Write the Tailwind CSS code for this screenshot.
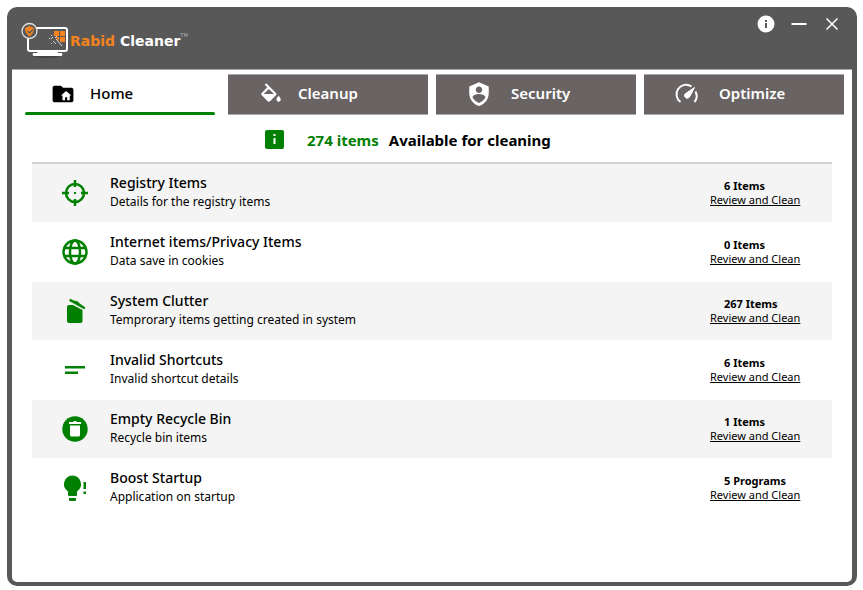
<!DOCTYPE html>
<html lang="en">
<head>
    <meta charset="UTF-8">
    <meta name="viewport" content="width=device-width, initial-scale=1.0">
    <title>Rabid Cleaner</title>
    <script src="https://cdn.jsdelivr.net/npm/@tailwindcss/browser@4"></script>
</head>
<body class="bg-white font-['Noto_Sans','Open_Sans',sans-serif] text-black">

<div class="min-h-screen flex flex-col pt-[7px] pr-[6px] pb-1 pl-[7px]">
<div class="flex-1 flex flex-col bg-[#585858] rounded-[10px] px-[5px] pb-1">

    <!-- Title bar -->
    <header class="flex justify-between items-start h-[62px] pl-2 pr-[11px] pt-2">
        <div class="flex items-start pt-1">
            <svg class="w-[50px] h-[40px]" viewBox="0 0 50 40" fill="none">
                <ellipse cx="26" cy="37" rx="13" ry="2" fill="#444"/>
                <rect x="8" y="9" width="39" height="23" rx="2" stroke="#fff" stroke-width="2"/>
                <path d="M18 32h19l1 2h4q1 3-1 3H14q-2 0-1-3h4z" fill="#fff"/>
                <circle cx="9.500" cy="12" r="7.500" fill="#585858" stroke="#e8e0da" stroke-width="1.300"/>
                <path d="M9.500 7l4.500 2q0 5.500-4.500 8.500-4.500-3-4.500-8.500z" fill="#f5841f"/>
                <path d="M7.500 12l2 2 3.500-3.500" stroke="#585858" stroke-width="1.200"/>
                <path d="M34 12h5v5h-5zM40 12h5v5h-5zM40 18h5v5h-5zM35 18h4v4z" fill="#f5841f"/>
                <path d="M36 20l6 7M31 20l2-2M37 17l-2 2M34 23l2 2" stroke="#d6d6d6" stroke-width="1"/>
                <path d="M31 16h1v1h-1zM29 19h1v1h-1zM33 22h1v1h-1zM31 24h1v1h-1z" fill="#d6d6d6"/>
            </svg>
            <p class="flex font-['DejaVu_Sans',sans-serif] text-[14px] leading-5 font-bold text-white whitespace-pre pt-3"><span class="text-[#f5841f]">Rabid</span> Cleaner<span class="text-[5px] leading-2 font-normal text-[#bbb]">TM</span></p>
        </div>
        <div class="flex items-center gap-4">
            <button type="button" aria-label="About" class="block">
                <svg class="w-[18px] h-[18px]" viewBox="0 0 18 18"><circle cx="9" cy="9" r="8.500" fill="#fff"/><path d="M8 5h2v2H8zM8 8h2v5H8z" fill="#585858"/></svg>
            </button>
            <button type="button" aria-label="Minimize" class="block">
                <svg class="w-4 h-[18px]" viewBox="0 0 16 18"><path d="M0.500 8h15v2h-15z" fill="#fff"/></svg>
            </button>
            <button type="button" aria-label="Close" class="block">
                <svg class="w-[18px] h-[18px]" viewBox="0 0 18 18"><path d="M3.500 3.500l11 11M14.500 3.500l-11 11" stroke="#fff" stroke-width="1.500"/></svg>
            </button>
        </div>
    </header>

    <main class="flex-1 bg-white rounded-b-[5px] border-t border-[#aaa]">

        <!-- Tabs -->
        <nav class="grid grid-cols-4 gap-2 px-2 pt-1 text-[15px] leading-5 font-semibold text-white">
            <button type="button" class="relative flex items-center h-[41px] pb-[3px] pl-[30px] gap-[14px] font-medium text-black">
                <svg class="w-[26px] h-[26px]" viewBox="-0.5 -1.5 25 25" fill="#000"><path d="M20 6h-8l-2-2H4c-1.100 0-2 .9-2 2v12c0 1.100.9 2 2 2h16c1.100 0 2-.9 2-2V8c0-1.100-.9-2-2-2z"/><path d="M15 9l-5 4.500h1.500V18h2.500v-3h2v3h2.500v-4.500H20z" fill="#fff"/></svg>
                Home
                <span class="absolute bottom-0 left-[5px] right-[5px] h-[3px] rounded-full bg-[#008000]"></span>
            </button>
            <button type="button" class="flex items-center h-[41px] pb-[3px] pl-[30px] gap-[14px] bg-[#696363] border-y border-[#aaa]">
                <svg class="w-[26px] h-[26px]" viewBox="0 0 24 24" fill="#fff"><path d="M16.560 8.940L7.620 0 6.210 1.410l2.380 2.380-5.150 5.150c-.59.59-.59 1.540 0 2.120l5.500 5.500c.29.29.68.44 1.060.44s.77-.15 1.060-.44l5.500-5.500c.59-.58.59-1.530 0-2.120zM5.210 10L10 5.210 14.790 10zM19 11.500s-2 2.170-2 3.500c0 1.100.9 2 2 2s2-.9 2-2c0-1.330-2-3.500-2-3.500z" transform="translate(0 3)"/></svg>
                Cleanup
            </button>
            <button type="button" class="flex items-center h-[41px] pb-[3px] pl-[30px] gap-[19px] bg-[#696363] border-y border-[#aaa]">
                <svg class="w-[26px] h-[26px]" viewBox="0 -1 24 24" fill="#fff"><path d="M12 1L3 5v6c0 5.550 3.840 10.740 9 12 5.160-1.260 9-6.450 9-12V5zm0 4c1.660 0 3 1.340 3 3s-1.340 3-3 3-3-1.340-3-3 1.340-3 3-3zm0 15.200c-2.500-.8-4.600-2.700-6-5.200.03-1.990 4-3.080 6-3.080s5.970 1.090 6 3.080c-1.400 2.500-3.500 4.400-6 5.200z"/></svg>
                Security
            </button>
            <button type="button" class="flex items-center h-[41px] pb-[3px] pl-[30px] gap-[19px] bg-[#696363] border-y border-[#aaa]">
                <svg class="w-[26px] h-[26px]" viewBox="0 0 26 26" fill="none" stroke="#fff" stroke-width="2"><path d="M6.500 22A9.500 9.500 0 0 1 17.500 6.500M21.500 11.500a9.500 9.500 0 0 1-1 10.500"/><path d="M20.500 7.500l-5 9.500a2.600 2.600 0 0 1-4.500-3z" fill="#fff" stroke-width="1"/></svg>
                Optimize
            </button>
        </nav>

        <!-- Scan summary -->
        <div class="mx-5 flex items-center h-[49px] pt-[2px] pl-[232px] border-b-2 border-[#d0d0d0] text-[15px] leading-5 font-bold">
            <svg class="w-[21px] h-[21px] mr-[22px]" viewBox="0 0 21 21"><rect x="1" y="1" width="19" height="19" rx="2" fill="#008000"/><path d="M9.500 5h2v2h-2zM9.500 9h2v6h-2z" fill="#fff"/></svg>
            <span class="text-[#008000] mr-[10px]">274 items</span>
            <span>Available for cleaning</span>
        </div>

        <!-- Categories -->
        <ul class="mx-5 flex flex-col gap-px">
            <li class="flex items-center h-[58px] bg-[#f4f4f4] pl-[29px]">
                <svg class="w-7 h-7 mr-[21px]" viewBox="0 0 28 28" fill="none" stroke="#008000" stroke-width="2.500"><circle cx="14" cy="14" r="9"/><path d="M14 1v7M14 20v7M1 14h7M20 14h7"/><path d="M13 13h2v2h-2z" fill="#008000" stroke="none"/></svg>
                <div class="flex-1 pb-1">
                    <h2 class="text-[14px] leading-5 font-medium">Registry Items</h2>
                    <p class="text-[12px] leading-[17px]">Details for the registry items</p>
                </div>
                <div class="flex flex-col items-start w-[122px] text-[11px] leading-[14px]">
                    <p class="pl-[14px] font-bold">6 Items</p>
                    <a href="#" class="underline">Review and Clean</a>
                </div>
            </li>
            <li class="flex items-center h-[58px] pl-[29px]">
                <svg class="w-7 h-7 mr-[21px]" viewBox="0 0 28 28" fill="none" stroke="#008000" stroke-width="2.500"><circle cx="14" cy="14" r="11.500"/><ellipse cx="14" cy="14" rx="5" ry="11.500"/><path d="M4 10h20M4 18h20"/></svg>
                <div class="flex-1 pb-1">
                    <h2 class="text-[14px] leading-5 font-medium">Internet items/Privacy Items</h2>
                    <p class="text-[12px] leading-[17px]">Data save in cookies</p>
                </div>
                <div class="flex flex-col items-start w-[122px] text-[11px] leading-[14px]">
                    <p class="pl-[14px] font-bold">0 Items</p>
                    <a href="#" class="underline">Review and Clean</a>
                </div>
            </li>
            <li class="flex items-center h-[58px] bg-[#f4f4f4] pl-[29px]">
                <svg class="w-7 h-7 mr-[21px]" viewBox="0 0 28 28" fill="#008000"><path d="M6 10q0-2 2-2h4l9.500 5v11q0 2-2 2H8q-2 0-2-2z"/><path d="M9 1.500l4 2q3.500-.5 6 3l5.500 4-1.200 2L8 4z" stroke="#f4f4f4" stroke-width=".3"/></svg>
                <div class="flex-1 pb-1">
                    <h2 class="text-[14px] leading-5 font-medium">System Clutter</h2>
                    <p class="text-[12px] leading-[17px]">Temprorary items getting created in system</p>
                </div>
                <div class="flex flex-col items-start w-[122px] text-[11px] leading-[14px]">
                    <p class="pl-[14px] font-bold">267 Items</p>
                    <a href="#" class="underline">Review and Clean</a>
                </div>
            </li>
            <li class="flex items-center h-[58px] pl-[29px]">
                <svg class="w-7 h-7 mr-[21px]" viewBox="0 0 28 28" fill="#008000"><path d="M4 10h20v2.500H4zM4 15.500h13V18H4z"/></svg>
                <div class="flex-1 pb-1">
                    <h2 class="text-[14px] leading-5 font-medium">Invalid Shortcuts</h2>
                    <p class="text-[12px] leading-[17px]">Invalid shortcut details</p>
                </div>
                <div class="flex flex-col items-start w-[122px] text-[11px] leading-[14px]">
                    <p class="pl-[14px] font-bold">6 Items</p>
                    <a href="#" class="underline">Review and Clean</a>
                </div>
            </li>
            <li class="flex items-center h-[58px] bg-[#f4f4f4] pl-[29px]">
                <svg class="w-7 h-7 mr-[21px]" viewBox="0 0 28 28"><circle cx="14" cy="14" r="12.700" fill="#008000"/><path d="M8 7h4l1-1h2l1 1h4v2H8zM9 10.500h10V20q0 1.500-1.500 1.500h-7Q9 21.500 9 20z" fill="#fff"/></svg>
                <div class="flex-1 pb-1">
                    <h2 class="text-[14px] leading-5 font-medium">Empty Recycle Bin</h2>
                    <p class="text-[12px] leading-[17px]">Recycle bin items</p>
                </div>
                <div class="flex flex-col items-start w-[122px] text-[11px] leading-[14px]">
                    <p class="pl-[14px] font-bold">1 Items</p>
                    <a href="#" class="underline">Review and Clean</a>
                </div>
            </li>
            <li class="flex items-center h-[58px] pl-[29px]">
                <svg class="w-7 h-7 mr-[21px]" viewBox="0 0 28 28" fill="#008000"><path d="M11.500 1.500a8.700 8.700 0 0 1 4.500 16V21q0 1-1 1H8q-1 0-1-1v-3.500a8.700 8.700 0 0 1 4.500-16zM8 24h7v2q0 1-1 1H9q-1 0-1-1zM22.500 8H25v7h-2.500zM22.500 17.500H25V20h-2.500z"/></svg>
                <div class="flex-1 pb-1">
                    <h2 class="text-[14px] leading-5 font-medium">Boost Startup</h2>
                    <p class="text-[12px] leading-[17px]">Application on startup</p>
                </div>
                <div class="flex flex-col items-start w-[122px] text-[11px] leading-[14px]">
                    <p class="pl-[14px] font-bold">5 Programs</p>
                    <a href="#" class="underline">Review and Clean</a>
                </div>
            </li>
        </ul>
    </main>
</div>
</div>

</body>
</html>
